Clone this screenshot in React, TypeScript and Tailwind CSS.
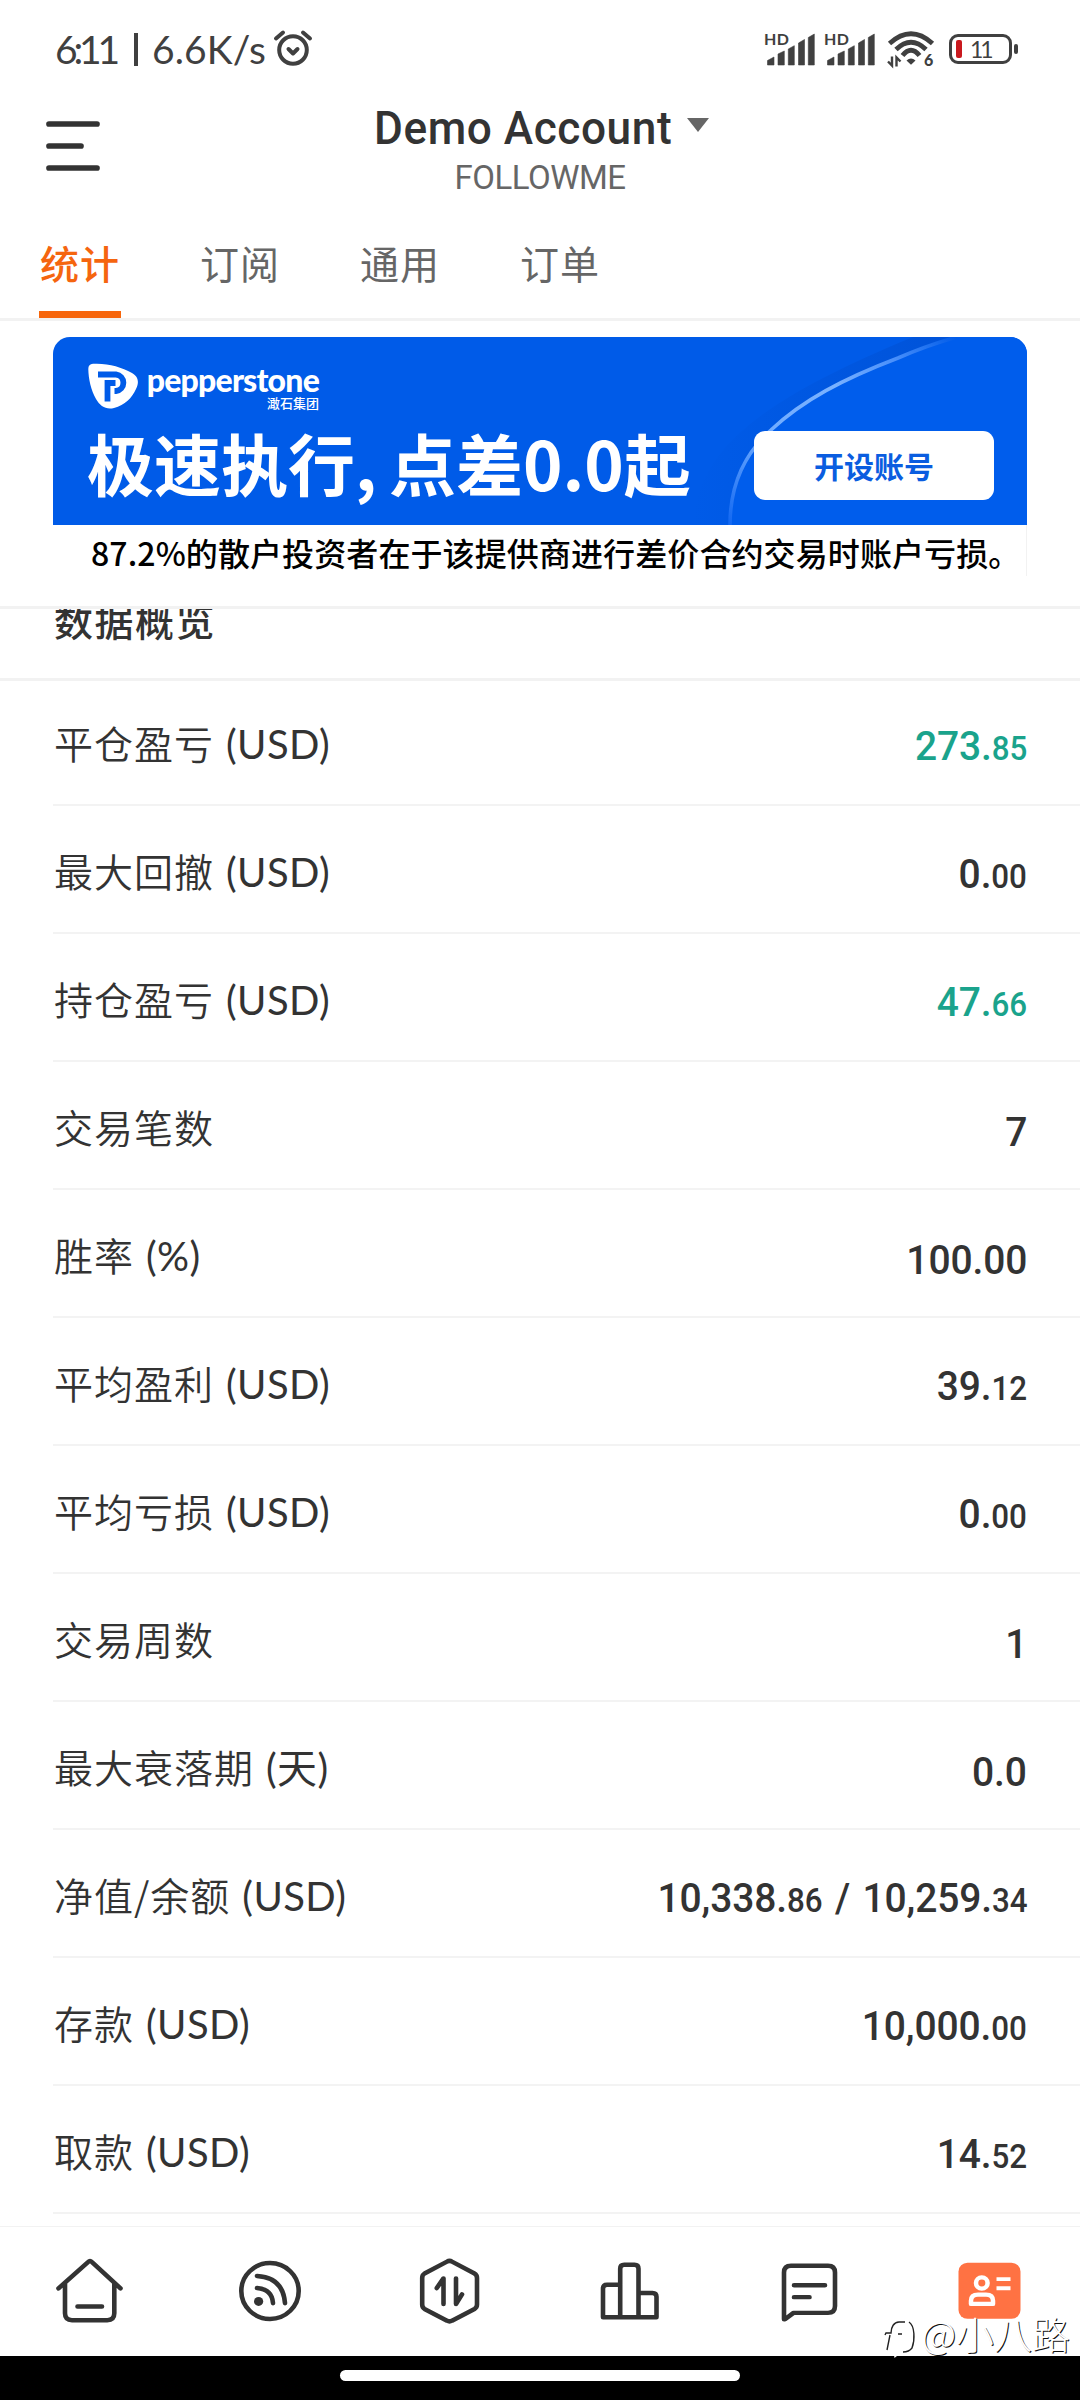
import React from 'react';

interface StatRow {
  label: string;
  unit?: string;
  parts: string[];
  positive?: boolean;
}

const rows: StatRow[] = [
  { label: '平仓盈亏', unit: '(USD)', parts: ['273.', '85'], positive: true },
  { label: '最大回撤', unit: '(USD)', parts: ['0.', '00'] },
  { label: '持仓盈亏', unit: '(USD)', parts: ['47.', '66'], positive: true },
  { label: '交易笔数', parts: ['7'] },
  { label: '胜率', unit: '(%)', parts: ['100.00'] },
  { label: '平均盈利', unit: '(USD)', parts: ['39.', '12'] },
  { label: '平均亏损', unit: '(USD)', parts: ['0.', '00'] },
  { label: '交易周数', parts: ['1'] },
  { label: '最大衰落期', unit: '(天)', parts: ['0.0'] },
  { label: '净值/余额', unit: '(USD)', parts: ['10,338.', '86', ' / 10,259.', '34'] },
  { label: '存款', unit: '(USD)', parts: ['10,000.', '00'] },
  { label: '取款', unit: '(USD)', parts: ['14.', '52'] },
];

const tabs = ['统计', '订阅', '通用', '订单'];

const Signal = () => (
  <svg className="w-[52px] h-[34px] overflow-visible" viewBox="0 0 52 34" fill="#404040">
    <text x="-1" y="13" fontSize="16" fontWeight="700" fontFamily="Lato, sans-serif" textLength="25">HD</text>
    <path d="M2.5 28.500l6.500-3.500v8H2.500zM13 22l6.300-3v14H13zM23.300 17l6-3.300V33h-6zM33.500 11l6-3.500V33h-6zM43.300 5.500l6-3.500v31h-6z" stroke="#404040" strokeWidth="0.6" strokeLinejoin="round" />
  </svg>
);

const StatusBar = () => (
  <div className="h-[98px] pl-[55px] pr-[62px] flex items-center justify-between text-[#404040]">
    <div className="flex items-center h-[44px]">
      <span className="font-['Lato'] text-[39px] leading-[44px] w-[63px] tracking-[-4.2px] whitespace-nowrap">6:11</span>
      <span className="w-[4px] h-[33px] bg-[#404040] ml-[16px] mr-[14px]" />
      <span className="font-['Lato'] text-[39px] leading-[44px] w-[115px] tracking-[0.1px] whitespace-nowrap">6.6K/s</span>
      <svg className="w-[40px] h-[38px] ml-[6px] -mt-[2px]" viewBox="0 0 40 38" fill="none" stroke="#404040" strokeWidth="4" strokeLinecap="round" strokeLinejoin="round">
        <circle cx="20" cy="21" r="13.800" />
        <path d="M15.500 20l4.500 4.500 4.500-4.500M3 9.500l7-6M37 9.500l-7-6" />
      </svg>
    </div>
    <div className="flex items-center">
      <Signal />
      <span className="w-[8px]" />
      <Signal />
      <svg className="w-[50px] h-[38px] ml-[9px] overflow-visible" viewBox="0 0 50 38" fill="none" stroke="#404040">
        <path d="M3.500 13.500Q25-6 46.500 13.500M10 19.500Q25 5 40 19.500M16.500 25.500Q25 15 33.500 25.500" strokeWidth="4.800" />
        <path d="M20.500 30.500Q25 26.500 29.500 30.500L25 34.700z" fill="#404040" stroke="none" />
        <path d="M6 26.500v9l-4-4M10.500 36.500v-9l4 4" strokeWidth="2.400" />
        <text x="38" y="36" fontSize="16" fontWeight="900" fontFamily="Lato, sans-serif" fill="#404040" stroke="none">6</text>
      </svg>
      <div className="flex items-center ml-[13px]">
        <div className="w-[63px] h-[30px] rounded-[9px] border-[3px] border-[#404040] flex items-center pl-[4px]">
          <span className="w-[6px] h-[18px] rounded-[2px] bg-[#c9191e]" />
          <span className="font-['Lato'] text-[23px] leading-[24px] ml-[8px] tracking-[-3px]">11</span>
        </div>
        <span className="w-[4px] h-[10px] rounded-[2px] bg-[#404040] ml-[2px]" />
      </div>
    </div>
  </div>
);

const Header = () => (
  <header className="h-[115px] flex justify-between px-[46px]">
    <svg className="w-[54px] h-[54px] mt-[21px]" viewBox="0 0 54 54" stroke="#333" strokeWidth="5.700" strokeLinecap="round">
      <path d="M3 5h48M3 27h32M3 49h48" />
    </svg>
    <div className="flex flex-col items-center font-['Roboto']">
      <div className="flex items-center">
        <h1 className="w-[301px] ml-[3px] whitespace-nowrap origin-left scale-x-[0.94] text-[47px] leading-[59px] font-medium text-[#333] tracking-[0.6px]">
          Demo Account
        </h1>
        <svg className="w-[22px] h-[14px] ml-[12px] mb-[5px]" viewBox="0 0 22 14"><path d="M0 0h22L11 14z" fill="#666" /></svg>
      </div>
      <p className="text-[33px] leading-[41px] tracking-[-0.5px] text-[#666]">FOLLOWME</p>
    </div>
    <div className="w-[54px]" />
  </header>
);

const Tabs = () => (
  <nav className="h-[108px] flex gap-[78px] pl-[39px] border-b-[3px] border-[#f2f2f2]">
    {tabs.map((tab, i) => (
      <div
        key={tab}
        className={`w-[82px] h-[105px] text-center whitespace-nowrap text-[39px] leading-[98px] tracking-[1px] ${
          i === 0 ? 'font-medium text-[#f5650f] border-b-[7px] border-[#f7660c]' : 'text-[#666]'
        }`}
      >
        {tab}
      </div>
    ))}
  </nav>
);

const Banner = () => (
  <section className="h-[288px] pt-[16px] px-[53px] border-b-[3px] border-[#f2f2f2]">
    <div className="relative h-[188px] rounded-t-[17px] overflow-hidden bg-[#005be8]">
      <svg className="absolute inset-0 w-full h-full" viewBox="0 0 974 188" fill="none">
        <defs>
          <linearGradient id="glow" x1="0" y1="1" x2="1" y2="0">
            <stop offset="0" stopColor="#1268f2" />
            <stop offset="0.3" stopColor="#6fabff" />
            <stop offset="0.6" stopColor="#7ab2ff" />
            <stop offset="0.8" stopColor="#4a90fb" />
            <stop offset="1" stopColor="#005be8" />
          </linearGradient>
          <linearGradient id="shade" x1="0" y1="0" x2="1" y2="0">
            <stop offset="0" stopColor="#0048c4" stopOpacity="0" />
            <stop offset="1" stopColor="#0048c4" stopOpacity="0.7" />
          </linearGradient>
        </defs>
        <path d="M640 188C645 120 690 70 860 0H904L845 21C790 42 750 63 718 93C690 118 677 150 677 188z" fill="url(#shade)" opacity="0.6" />
        <path d="M677 188C677 150 690 118 718 93C750 63 790 42 845 21Q875 8 904 0H974V188z" fill="#005dec" />
        <path d="M677 188C677 150 690 118 718 93C750 63 790 42 845 21Q875 8 904 0" stroke="url(#glow)" strokeWidth="3.600" />
      </svg>
      <div className="relative flex justify-between">
        <div className="pl-[35px] pt-[26px] text-white">
          <div className="flex h-[46px]">
            <svg className="w-[50px] h-[46px]" viewBox="0 0 50 46">
              <path d="M5 .8C20 0 33 4 44 10C51 14 51 20 48 26C44 35 37 42 26 45C18 47 12 43 8 36C3 27 .5 16 .3 6Q.3 1 5 .8z" fill="#fff" />
              <path d="M10 11.500H28a8.300 8.300 0 0 1 0 16.500H26.500M19.500 38.500V20H27.500" fill="none" stroke="#005be8" strokeWidth="5.800" />
            </svg>
            <div className="ml-[9px] w-[172px] flex flex-col items-end">
              <span className="font-['Lato'] font-black text-[32px] leading-[34px] tracking-[-0.8px] whitespace-nowrap">pepperstone</span>
              <span className="text-[13px] leading-[12px] font-medium">澉石集团</span>
            </div>
          </div>
          <div className="text-[67px] leading-[70px] font-bold whitespace-nowrap mt-[18px] -ml-[1px]">
            极速执行<span className="inline-block w-[34px] overflow-visible">,</span>点差0.0起
          </div>
        </div>
        <button className="w-[240px] h-[69px] mt-[94px] mr-[33px] rounded-[11px] bg-white text-[#0a5de0] text-[30px] font-bold">
          开设账号
        </button>
      </div>
    </div>
    <p className="h-[51px] pl-[38px] border-r border-[#f2f2f2] text-[32px] leading-[55px] tracking-[0.1px] font-medium text-black whitespace-nowrap">
      87.2%的散户投资者在于该提供商进行差价合约交易时账户亏损。
    </p>
  </section>
);

const Row: React.FC<{ row: StatRow }> = ({ row }) => (
  <li className="h-[128px] ml-[53px] pl-[1px] pr-[53px] pt-[6px] flex items-center justify-between border-b-[2px] border-[#f3f3f3]">
    <span className="flex items-center text-[39px] leading-[56px] tracking-[1px] text-[#333] font-[350] -mt-[5px]">
      {row.label}
      {row.unit && (
        <span className="ml-[12px] mt-[5px] font-['Lato','Noto_Sans_CJK_SC'] font-normal text-[40px] tracking-[0.4px]">{row.unit}</span>
      )}
    </span>
    <span
      className={`font-['Roboto'] font-medium text-[41px] leading-[56px] tracking-[-0.1px] whitespace-pre mt-[7px] origin-right scale-x-[0.95] [word-spacing:3px] ${
        row.positive ? 'text-[#1aa38c]' : 'text-[#333]'
      }`}
    >
      {row.parts.map((part, i) => (
        <span key={i} className={i % 2 === 1 ? 'text-[33px]' : ''}>{part}</span>
      ))}
    </span>
  </li>
);

const Watermark = () => (
  <div className="absolute right-[10px] bottom-[41px] flex items-center text-white text-[38px] leading-[52px] font-light [text-shadow:1px_1px_0_#111]">
    <svg className="w-[32px] h-[42px] mr-[5px] mt-[9px]" viewBox="0 0 32 42" fill="none" stroke="#222" strokeWidth="1.400">
      <path d="M9 33L10.500 41L19 34z" fill="#fff" stroke="none" />
      <path d="M1 18l1-2h5c0-6 3-11 8-11h6M25 5c6 4 6 18 3 26q-3 4-9 4M6 18L3 33M14 17h4" />
    </svg>
    @小八路
  </div>
);

const NavIcon: React.FC<{ children: React.ReactNode }> = ({ children }) => (
  <svg
    className="w-[72px] h-[70px] -mt-[2px]"
    viewBox="0 0 72 72"
    preserveAspectRatio="none"
    fill="none"
    stroke="#333"
    strokeWidth="4.600"
    strokeLinecap="round"
    strokeLinejoin="round"
  >
    {children}
  </svg>
);

const BottomNav = () => (
  <nav className="h-[130px] border-t border-[#f2f2f2] grid grid-cols-6 items-center justify-items-center">
    <NavIcon>
      <path d="M4.500 33.300L34 6.200Q36 4.200 38 6.200L66.500 33.300M11 28v31q0 7 7 7h35.300q7 0 7-7V28M23.500 52h24.500" />
    </NavIcon>
    <NavIcon>
      <circle cx="36" cy="36" r="28.700" />
      <circle cx="24.600" cy="46.700" r="4.600" fill="#333" stroke="none" />
      <path d="M23 33Q38 34 39 48.500M23 20.500Q49 22 51 48.500" />
    </NavIcon>
    <NavIcon>
      <path d="M33 5.800Q35.500 4.200 38 5.800L60.500 18Q63 19.500 63 22.500V50Q63 53 60.500 54.500L38 66.500Q35.500 68 33 66.500L10.500 54.500Q8.200 53 8.200 50V22.500Q8.200 19.500 10.500 18z" />
      <path d="M29.500 49.400V23L22.800 33M42 23v26.400L48 39.500" />
    </NavIcon>
    <NavIcon>
      <path d="M26.200 29.500H13q-4 0-4 4V63H62.500V42q0-4-4-4H44.500M26.200 63V13q0-4 4-4h10.300q4 0 4 4V63" />
    </NavIcon>
    <NavIcon>
      <path d="M10 65V17q0-7 7-7H54q7 0 7 7V51.500q0 7-7 7H19.500L11 65zM20 30H51M20 42.300H35.500" />
    </NavIcon>
    <NavIcon>
      <rect x="4.500" y="7" width="62" height="57.500" rx="9" fill="#ff7243" stroke="none" />
      <g stroke="#fff" strokeWidth="4.500">
        <circle cx="27.800" cy="27.800" r="5.800" />
        <path d="M17 49.300V46q0-6.300 7-6.300h8q7 0 7 6.300v3.300z" />
        <path d="M44.500 23.800H54.500M44.500 33.200H54.500" strokeLinecap="square" strokeWidth="4" />
      </g>
    </NavIcon>
  </nav>
);

const App = () => {
  return (
    <div className="relative w-[1080px] h-[2400px] bg-white overflow-hidden flex flex-col font-['Noto_Sans_CJK_SC',sans-serif]">
      <StatusBar />
      <Header />
      <Tabs />
      <Banner />
      <main className="h-[1617px] overflow-hidden">
        <div className="h-[72px] overflow-hidden border-b-[3px] border-[#f2f2f2]">
          <h2 className="ml-[54px] mt-[-18px] text-[39px] leading-[56px] tracking-[1.500px] font-medium text-[#333]">数据概览</h2>
        </div>
        <ul className="-mt-[3px]">
          {rows.map((row) => (
            <Row key={row.label} row={row} />
          ))}
        </ul>
      </main>
      <BottomNav />
      <div className="h-[44px] bg-black flex justify-center pt-[14px]">
        <div className="w-[400px] h-[11px] rounded-full bg-white" />
      </div>
      <Watermark />
    </div>
  );
};

export default App;
